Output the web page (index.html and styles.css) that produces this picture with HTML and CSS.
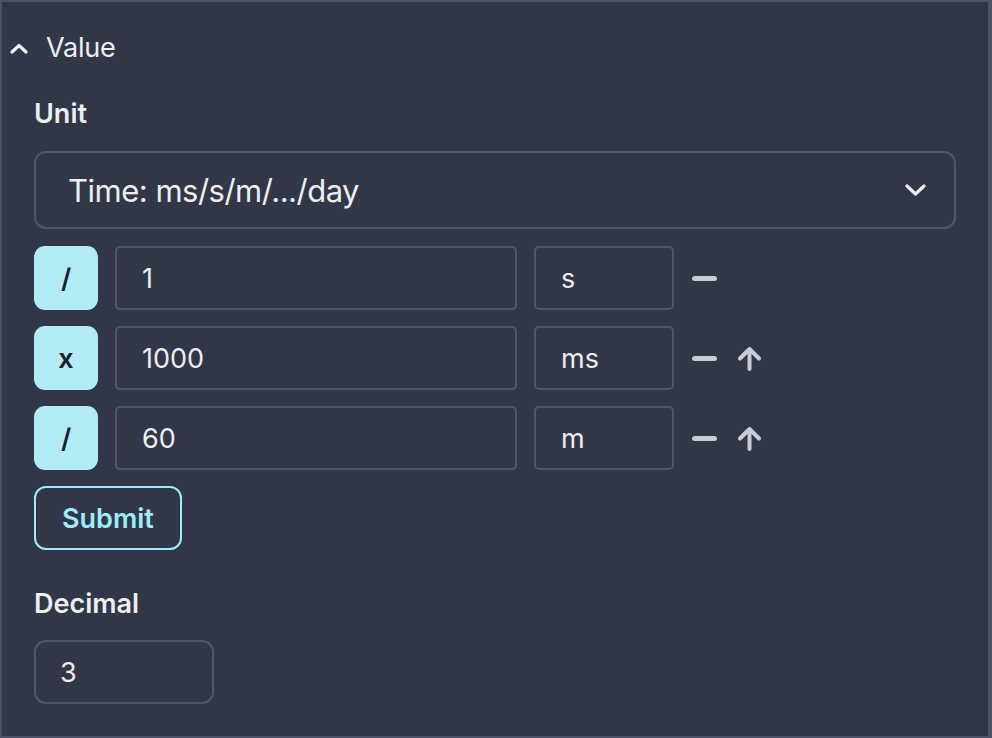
FILE: index.html
```html
<!DOCTYPE html>
<html>
<head>
<meta charset="utf-8">
<link rel="stylesheet" href="styles.css">
</head>
<body>
<div class="panel">
  <div class="header">
    <svg class="chev-up" width="18" height="11" viewBox="0 0 18 11"><path d="M2 9 L9 2.5 L16 9" fill="none" stroke="#eef0f3" stroke-width="3.2" stroke-linecap="round" stroke-linejoin="round"/></svg>
    <span class="title">Value</span>
  </div>
  <div class="content">
    <div class="label">Unit</div>
    <div class="select">
      <span class="select-text">Time: ms/s/m/.../day</span>
      <svg width="21" height="14" viewBox="0 0 21 14"><path d="M2 3 L10.5 11 L19 3" fill="none" stroke="#eef0f3" stroke-width="3.2" stroke-linecap="round" stroke-linejoin="round"/></svg>
    </div>
    <div class="rows">
      <div class="row">
        <div class="op">/</div>
        <div class="field num">1</div>
        <div class="field unit">s</div>
        <div class="actions">
          <span class="minus"></span>
        </div>
      </div>
      <div class="row">
        <div class="op">x</div>
        <div class="field num">1000</div>
        <div class="field unit">ms</div>
        <div class="actions">
          <span class="minus"></span>
          <svg class="arrow" width="25" height="25" viewBox="0 0 25 25"><path d="M12.5 23 V3.5 M3 12.5 L12.5 3 L22 12.5" fill="none" stroke="#c9ccd3" stroke-width="4" stroke-linecap="round" stroke-linejoin="round"/></svg>
        </div>
      </div>
      <div class="row">
        <div class="op">/</div>
        <div class="field num">60</div>
        <div class="field unit">m</div>
        <div class="actions">
          <span class="minus"></span>
          <svg class="arrow" width="25" height="25" viewBox="0 0 25 25"><path d="M12.5 23 V3.5 M3 12.5 L12.5 3 L22 12.5" fill="none" stroke="#c9ccd3" stroke-width="4" stroke-linecap="round" stroke-linejoin="round"/></svg>
        </div>
      </div>
      <div class="submit-row"><div class="submit">Submit</div></div>
    </div>
    <div class="label decimal-label">Decimal</div>
    <div class="decimal">3</div>
  </div>
</div>
</body>
</html>
```

FILE: styles.css
```css
html, body {
  margin: 0;
  padding: 0;
  background: #313747;
}
.panel {
  box-sizing: border-box;
  width: 992px;
  height: 738px;
  border: 2px solid #4b5263;
  border-right-width: 4px;
  background: #313747;
  font-family: Inter, "Noto Sans", sans-serif;
  color: #eceef2;
}
.header {
  display: flex;
  align-items: center;
  height: 36px;
  margin-top: 28px;
  padding-left: 8px;
}
.chev-up {
  display: block;
  margin-right: 18px;
}
.title {
  font-size: 27px;
  line-height: 36px;
  letter-spacing: -0.2px;
}
.content {
  padding: 0 32px 0 32px;
}
.label {
  font-size: 27px;
  font-weight: 600;
  line-height: 36px;
  margin-top: 30px;
  margin-bottom: 19px;
}
.select {
  box-sizing: border-box;
  height: 78px;
  border: 2px solid #4f5767;
  border-radius: 12px;
  display: flex;
  align-items: center;
  justify-content: space-between;
  padding: 0 28px 0 32px;
  font-size: 31px;
}
.select-text { letter-spacing: -0.5px; }
.select svg { display: block; }
.rows {
  display: flex;
  flex-direction: column;
  gap: 16px;
  margin-top: 17px;
}
.row {
  display: flex;
  align-items: center;
  height: 64px;
}
.op {
  width: 64px;
  height: 64px;
  border-radius: 11px;
  background: #b3ecf6;
  color: #1a202c;
  font-size: 27px;
  font-weight: 600;
  display: flex;
  align-items: center;
  justify-content: center;
  margin-right: 17px;
}
.field {
  box-sizing: border-box;
  height: 64px;
  border: 2px solid #4f5767;
  border-radius: 5px;
  font-size: 27px;
  display: flex;
  align-items: center;
  padding-left: 25px;
}
.num {
  width: 402px;
  margin-right: 17px;
}
.unit {
  width: 140px;
  margin-right: 18px;
}
.actions {
  display: flex;
  align-items: center;
  gap: 20px;
}
.minus {
  display: block;
  width: 25px;
  height: 5px;
  border-radius: 3px;
  background: #c9ccd3;
}
.arrow { display: block; }
.submit-row { display: flex; }
.submit {
  box-sizing: border-box;
  height: 64px;
  padding: 0 26px;
  border: 2px solid #9decf9;
  border-radius: 12px;
  color: #9decf9;
  font-size: 27px;
  font-weight: 600;
  display: flex;
  align-items: center;
}
.decimal-label {
  margin-top: 36px;
  margin-bottom: 18px;
}
.decimal {
  box-sizing: border-box;
  width: 180px;
  height: 64px;
  border: 2px solid #4f5767;
  border-radius: 12px;
  font-size: 27px;
  display: flex;
  align-items: center;
  padding-left: 24px;
}
```
